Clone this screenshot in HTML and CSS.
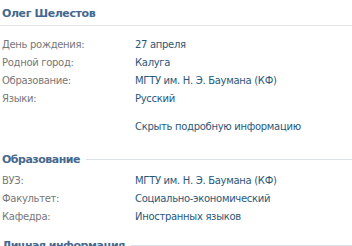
FILE: index.html
```html
<!DOCTYPE html>
<html lang="ru">
<head>
<meta charset="utf-8">
<link rel="stylesheet" href="styles.css">
</head>
<body>
<div class="profile">
  <div class="name">Олег Шелестов</div>
  <div class="rows">
    <div class="row"><span class="label">День рождения:</span><span class="value">27 апреля</span></div>
    <div class="row"><span class="label">Родной город:</span><span class="value">Калуга</span></div>
    <div class="row"><span class="label">Образование:</span><span class="value">МГТУ им. Н. Э. Баумана (КФ)</span></div>
    <div class="row"><span class="label">Языки:</span><span class="value">Русский</span></div>
  </div>
  <div class="toggle"><span class="link">Скрыть подробную информацию</span></div>
  <div class="section"><span class="section-title">Образование</span><span class="section-line"></span></div>
  <div class="rows rows-section">
    <div class="row"><span class="label">ВУЗ:</span><span class="value">МГТУ им. Н. Э. Баумана (КФ)</span></div>
    <div class="row"><span class="label">Факультет:</span><span class="value">Социально-экономический</span></div>
    <div class="row"><span class="label">Кафедра:</span><span class="value">Иностранных языков</span></div>
  </div>
  <div class="section section-next"><span class="section-title">Личная информация</span><span class="section-line"></span></div>
</div>
</body>
</html>
```
FILE: styles.css
```css
html, body {
  margin: 0;
  padding: 0;
  background: #ffffff;
}
.profile {
  font-family: "DejaVu Sans", Tahoma, sans-serif;
  font-size: 10px;
  letter-spacing: -0.3px;
  width: 352px;
  overflow: hidden;
}
.name {
  height: 25px;
  line-height: 28px;
  padding-left: 2px;
  font-weight: bold;
  font-size: 11px;
  letter-spacing: -0.4px;
  color: #45688e;
  border-bottom: 1px solid #e4e6e9;
}
.rows {
  padding-top: 10px;
  display: flex;
  flex-direction: column;
}
.row {
  display: flex;
  height: 18px;
  line-height: 18px;
}
.label {
  width: 133px;
  padding-left: 2px;
  color: #777777;
}
.value {
  color: #2b587a;
}
.toggle {
  padding: 10px 0 0 135px;
  height: 18px;
  line-height: 18px;
}
.link {
  color: #2b587a;
}
.section {
  display: flex;
  align-items: center;
  margin-top: 14px;
  padding-left: 2px;
  height: 18px;
}
.section-next {
  margin-top: 10px;
}
.section-title {
  font-weight: bold;
  font-size: 11px;
  letter-spacing: -0.5px;
  color: #45688e;
}
.section-line {
  flex: 1;
  height: 1px;
  margin-left: 6px;
  background: #dae1e8;
}
.rows-section {
  padding-top: 4px;
}
```
